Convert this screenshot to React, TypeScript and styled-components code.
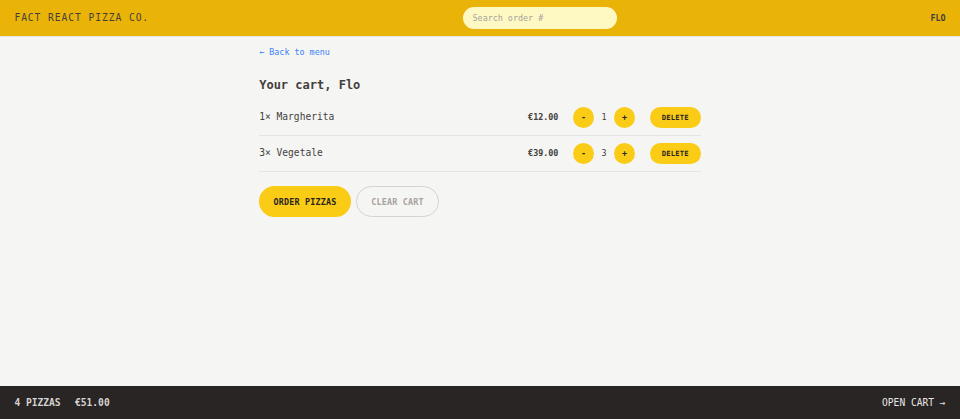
import styled, { createGlobalStyle } from 'styled-components';

const GlobalStyle = createGlobalStyle`
  html, body {
    margin: 0;
    padding: 0;
    height: 100%;
  }
  body {
    font-family: "DejaVu Sans Mono", "Liberation Mono", monospace;
    background: #f5f5f4;
    color: #44403c;
  }
  #root {
    height: 100%;
  }
`;

const Layout = styled.div`
  display: grid;
  grid-template-rows: auto 1fr auto;
  height: 419px;
`;

const Header = styled.header`
  display: flex;
  align-items: center;
  justify-content: space-between;
  background: #eab308;
  padding: 7.2px 14.4px;
  border-bottom: 1px solid #e7e5e4;
`;

const Logo = styled.a`
  font-size: 9.6px;
  letter-spacing: 0.1em;
  text-transform: uppercase;
  color: #44403c;
  text-decoration: none;
`;

const Search = styled.input`
  width: 153.6px;
  box-sizing: border-box;
  border: none;
  outline: none;
  border-radius: 999px;
  background: #fef9c3;
  padding: 4.8px 9.6px;
  font-family: inherit;
  font-size: 8.4px;
  line-height: 12px;
  color: #44403c;

  &::placeholder {
    color: #a8a29e;
  }
`;

const UserName = styled.div`
  font-size: 8.4px;
  font-weight: 600;
  text-transform: uppercase;
`;

const Main = styled.main`
  overflow: auto;
`;

const Container = styled.div`
  max-width: 460.8px;
  margin: 0 auto;
  padding: 9px 9.6px;
  box-sizing: border-box;
  font-size: 8.4px;
  line-height: 12px;
`;

const BackLink = styled.a`
  font-size: 8.4px;
  line-height: 12px;
  color: #3b82f6;
  text-decoration: none;
`;

const Title = styled.h2`
  margin: 18.6px 0 0;
  font-size: 12px;
  line-height: 16.8px;
  font-weight: 600;
  color: #44403c;
`;

const List = styled.ul`
  list-style: none;
  margin: 6.5px 0 0;
  padding: 0;
`;

const Item = styled.li`
  display: flex;
  align-items: center;
  justify-content: space-between;
  padding: 6.7px 0;
  border-bottom: 1px solid #e7e5e4;
`;

const ItemName = styled.p`
  margin: 0;
  font-size: 9.6px;
`;

const ItemRight = styled.div`
  display: flex;
  align-items: center;
  gap: 14.4px;
`;

const Price = styled.p`
  margin: 0;
  font-size: 8.4px;
  font-weight: 700;
`;

const Quantity = styled.div`
  display: flex;
  align-items: center;
  gap: 7.2px;
  font-size: 8.4px;
  font-weight: 500;
`;

const Button = styled.button<{ $variant?: 'round' | 'small' | 'primary' | 'secondary' }>`
  display: inline-flex;
  align-items: center;
  justify-content: center;
  box-sizing: border-box;
  border: none;
  border-radius: 999px;
  background: #facc15;
  color: #292524;
  font-family: inherit;
  font-weight: 600;
  text-transform: uppercase;
  letter-spacing: 0.025em;
  cursor: pointer;

  ${({ $variant }) =>
    $variant === 'round' &&
    `
    width: 21.6px;
    height: 21.6px;
    padding: 0;
    font-size: 8.4px;
  `}

  ${({ $variant }) =>
    $variant === 'small' &&
    `
    height: 21.6px;
    padding: 0 12px;
    font-size: 7.2px;
  `}

  ${({ $variant }) =>
    $variant === 'primary' &&
    `
    height: 31px;
    padding: 0 14.4px;
    font-size: 8.4px;
  `}

  ${({ $variant }) =>
    $variant === 'secondary' &&
    `
    height: 31px;
    padding: 0 14.4px;
    font-size: 8.4px;
    background: transparent;
    border: 1.2px solid #d6d3d1;
    color: #a8a29e;
  `}
`;

const Actions = styled.div`
  display: flex;
  gap: 4.8px;
  margin-top: 14.4px;
`;

const Footer = styled.footer`
  display: flex;
  align-items: center;
  justify-content: space-between;
  background: #292524;
  color: #e7e5e4;
  padding: 10.4px 14.4px 8.8px;
  font-size: 9.6px;
  line-height: 14px;
  text-transform: uppercase;
`;

const Summary = styled.p`
  margin: 0;
  display: flex;
  gap: 14.4px;
  font-weight: 600;
  color: #d6d3d1;
`;

const OpenCart = styled.a`
  color: #e7e5e4;
  text-decoration: none;
`;

const cart = [
  { id: 1, name: 'Margherita', quantity: 1, total: 12 },
  { id: 2, name: 'Vegetale', quantity: 3, total: 39 },
];

const money = (n: number) => `€${n.toFixed(2)}`;

export default function App() {
  const count = cart.reduce((s, i) => s + i.quantity, 0);
  const total = cart.reduce((s, i) => s + i.total, 0);

  return (
    <>
      <GlobalStyle />
      <Layout>
        <Header>
          <Logo href="#">Fact React Pizza Co.</Logo>
          <Search placeholder="Search order #" />
          <UserName>Flo</UserName>
        </Header>

        <Main>
          <Container>
            <BackLink href="#">&larr; Back to menu</BackLink>
            <Title>Your cart, Flo</Title>
            <List>
              {cart.map((item) => (
                <Item key={item.id}>
                  <ItemName>
                    {item.quantity}&times; {item.name}
                  </ItemName>
                  <ItemRight>
                    <Price>{money(item.total)}</Price>
                    <Quantity>
                      <Button $variant="round">-</Button>
                      <span>{item.quantity}</span>
                      <Button $variant="round">+</Button>
                    </Quantity>
                    <Button $variant="small">Delete</Button>
                  </ItemRight>
                </Item>
              ))}
            </List>
            <Actions>
              <Button $variant="primary">Order pizzas</Button>
              <Button $variant="secondary">Clear cart</Button>
            </Actions>
          </Container>
        </Main>

        <Footer>
          <Summary>
            <span>{count} pizzas</span>
            <span>{money(total)}</span>
          </Summary>
          <OpenCart href="#">Open cart &rarr;</OpenCart>
        </Footer>
      </Layout>
    </>
  );
}
